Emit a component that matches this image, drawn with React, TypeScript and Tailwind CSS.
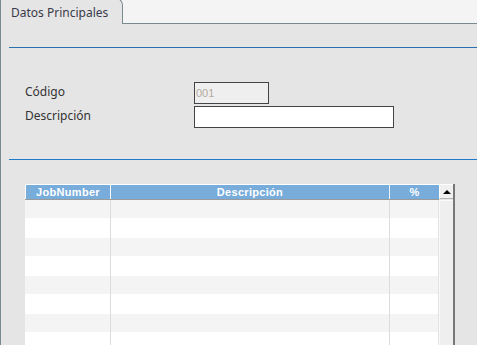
import React from "react";

const rows = [18, 20, 18, 20, 18, 20, 18, 20];

export default function App() {
  return (
    <div className="w-[477px] h-[345px] overflow-hidden bg-[#e5e5e5] flex flex-col font-['Noto_Sans',sans-serif] text-[12px] text-[#333]">
      <div className="flex h-[24px] shrink-0 bg-[#f4f4f4]">
        <div className="w-[123px] h-[26px] -mt-[2px] shrink-0 border-l border-t border-r border-[#7a8a90] rounded-tr-[7px] rounded-tl-[3px] bg-[#e5e5e5] pl-[10px] pt-[6px] leading-[16px] text-[#3a3a48]">
          Datos Principales
        </div>
        <div className="flex-1 border-b border-[#7a8a90]" />
      </div>
      <div className="flex-1 border-l border-[#7a8a90] pl-[8px] flex flex-col min-h-0 overflow-hidden">
        <div className="shrink-0 mt-[23px] h-0 border-t border-[#2a70ae]" />
        <div className="shrink-0 mt-[34px] ml-[16px] grid grid-cols-[169px_auto] gap-y-[2px] items-start">
          <div className="leading-[16px] mt-[2px]">Código</div>
          <div className="w-[75px] h-[22px] border border-[#444] bg-[#efefef] pl-[1px] flex items-center font-['Liberation_Sans',sans-serif] text-[11px] text-[#b3aa9f]">
            001
          </div>
          <div className="leading-[16px] mt-[2px]">Descripción</div>
          <div className="w-[200px] h-[22px] border border-[#444] bg-white" />
        </div>
        <div className="shrink-0 mt-[31px] h-0 border-t border-[#1f7acb]" />
        <div className="shrink-0 mt-[24px] ml-[16px] flex items-start">
          <div className="w-[414px] flex flex-col shrink-0">
            <div className="shrink-0 flex h-[16px] border-t border-white border-b border-b-[#9a9a9a] bg-[#77acdb] font-['Liberation_Sans',sans-serif] font-bold text-[11px] text-white tracking-[0.3px] leading-[14px]">
              <div className="w-[86px] border-l border-r border-white text-center">JobNumber</div>
              <div className="w-[279px] border-r border-[#eef2f6] text-center">Descripción</div>
              <div className="w-[49px] text-center">%</div>
            </div>
            {rows.map((h, i) => (
              <div
                key={i}
                className={`shrink-0 flex ${i % 2 === 0 ? "bg-[#f4f4f4]" : "bg-white"}`}
                style={{ height: h }}
              >
                <div className="w-[86px] border-r border-[#dcdcdc]" />
                <div className="w-[279px] border-r border-[#dcdcdc]" />
                <div className="w-[49px] border-r border-[#e2e2e2]" />
              </div>
            ))}
          </div>
          <div className="w-[16px] h-[200px] shrink-0 border-r-2 border-[#777] flex flex-col">
            <div className="h-[15px] shrink-0 bg-[#f0f0f0] border-t border-l border-white border-b border-b-[#b5b5b5] flex items-center justify-center">
              <div className="w-0 h-0 border-l-[4px] border-r-[4px] border-b-[4px] border-l-transparent border-r-transparent border-b-black" />
            </div>
            <div className="flex-1 mt-[1px] bg-[#efefef] border-l border-t border-[#fafafa]" />
          </div>
        </div>
      </div>
    </div>
  );
}
